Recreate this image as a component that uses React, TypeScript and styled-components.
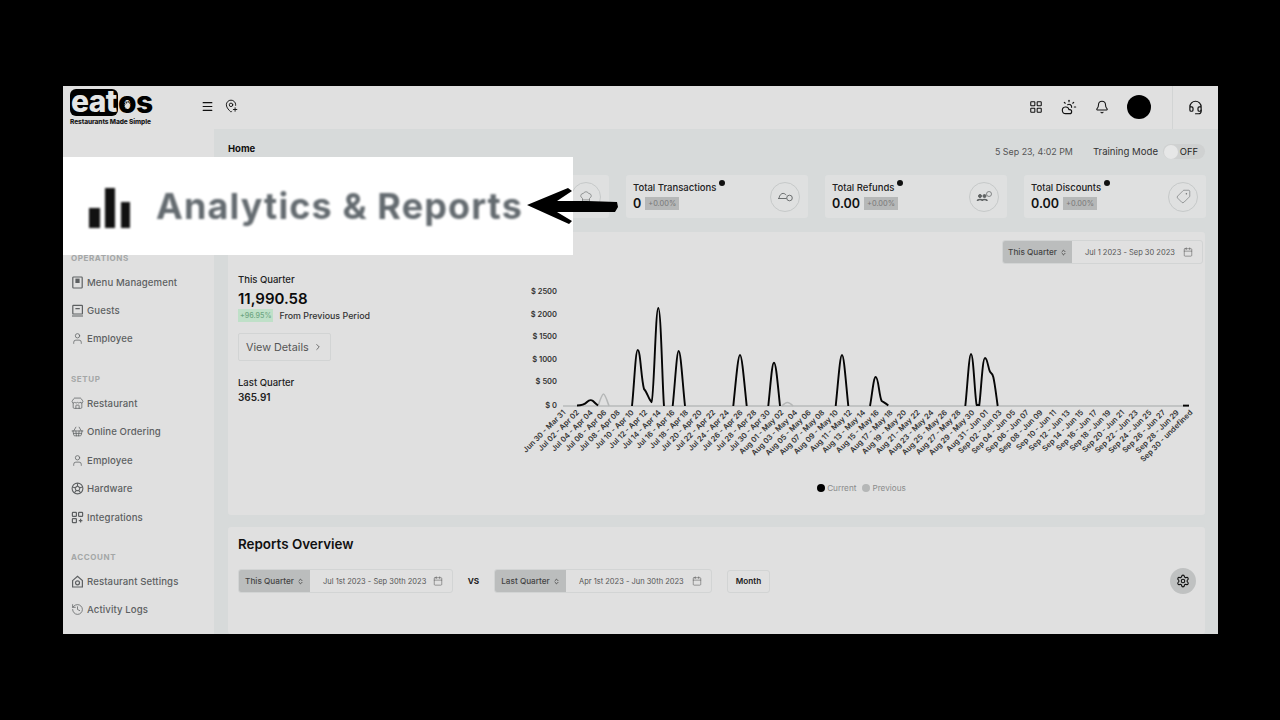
import React from "react";
import styled, { createGlobalStyle } from "styled-components";
import {
  Bell,
  Calendar,
  ChefHat,
  ChevronRight,
  ChevronsUpDown,
  CloudSun,
  Headset,
  History,
  LayoutGrid,
  MapPinPlus,
  Menu,
  Settings,
  ShoppingBasket,
  Store,
  Tag,
  User,
} from "lucide-react";

const FONT = `Inter, "Open Sans", "Liberation Sans", sans-serif`;

const GlobalStyle = createGlobalStyle`
  html, body {
    margin: 0;
    height: 100%;
    background: #000;
    font-family: ${FONT};
    overflow: hidden;
  }
`;

const Page = styled.div`
  width: 1280px;
  height: 720px;
  padding: 86px 62px 86px 63px;
  box-sizing: border-box;
  background: #000;
`;

const Frame = styled.div`
  position: relative;
  width: 1155px;
  height: 548px;
  display: flex;
  flex-direction: column;
  background: #e0e0e0;
`;

const TopBar = styled.header`
  height: 43px;
  flex: none;
  display: flex;
  align-items: center;
  background: #e0e0e0;
`;

const Logo = styled.div`
  width: 131px;
  padding-left: 7px;
  flex: none;
  color: #000;
`;

const LogoMark = styled.div`
  position: relative;
  display: flex;
  align-items: center;
  height: 27px;
  font-size: 30px;
  font-weight: 800;
  letter-spacing: -0.6px;
  line-height: 27px;
`;

const LogoBox = styled.span`
  width: 48px;
  height: 27px;
  border-radius: 6px;
  background: #000;
  color: #e4e5e5;
  display: block;
  line-height: 24px;
  padding-left: 1px;
  box-sizing: border-box;
`;

const LogoTail = styled.span`
  line-height: 27px;
`;

const LogoBurst = styled.svg`
  position: absolute;
  left: 52px;
  top: 11px;
`;

const LogoTag = styled.div`
  margin-top: 3px;
  font-size: 6.6px;
  line-height: 7px;
  font-weight: 800;
  letter-spacing: -0.1px;
  color: #1a1a1a;
  white-space: nowrap;
`;

const BarTools = styled.div`
  margin-top: -3px;
  display: flex;
  align-items: center;
  gap: 10px;
  color: #111;
`;

const BarRight = styled.div`
  margin-left: auto;
  margin-top: -1px;
  display: flex;
  align-items: center;
  gap: 18px;
  color: #111;
`;

const Avatar = styled.div`
  width: 24px;
  height: 24px;
  border-radius: 50%;
  background: #000;
`;

const Support = styled.div`
  width: 46px;
  height: 43px;
  margin-left: 3px;
  display: flex;
  align-items: center;
  justify-content: center;
  border-left: 1px solid #d2d4d4;
  box-sizing: border-box;
`;

const Body = styled.div`
  flex: 1;
  min-height: 0;
  display: flex;
`;

const Sidebar = styled.nav`
  width: 151px;
  flex: none;
  padding: 122.7px 0 0 8px;
  box-sizing: border-box;
  background: #e0e0e0;
`;

const NavTitle = styled.div<{ $first?: boolean }>`
  height: 12px;
  line-height: 12px;
  font-size: 8px;
  font-weight: 700;
  letter-spacing: 0.6px;
  color: #a4a7a7;
  margin-top: ${(p) => (p.$first ? "0" : "19.8px")};
  margin-bottom: 4.3px;
`;

const NavItem = styled.div`
  height: 28.4px;
  display: flex;
  align-items: center;
  gap: 3px;
  font-size: 9.6px;
  font-weight: 500;
  letter-spacing: 0.1px;
  color: #5d6062;
  white-space: nowrap;
`;

const Main = styled.main`
  flex: 1;
  min-width: 0;
  padding: 0 13px 0 14px;
  background: #d7dada;
  overflow: hidden;
`;

const MainHead = styled.div`
  height: 46px;
  display: flex;
  align-items: flex-start;
  justify-content: space-between;
`;

const Crumb = styled.div`
  margin-top: 14px;
  font-size: 9.5px;
  font-weight: 700;
  color: #111;
`;

const HeadRight = styled.div`
  margin-top: 15px;
  display: flex;
  align-items: center;
  font-size: 8.9px;
  color: #555;
`;

const Training = styled.span`
  margin-left: 20px;
  color: #333;
  font-size: 9.6px;
`;

const Toggle = styled.div`
  margin-left: 5px;
  width: 42px;
  height: 15px;
  border-radius: 8px;
  background: #cfd1d1;
  display: flex;
  align-items: center;
  justify-content: space-between;
  padding: 0 7px 0 1px;
  box-sizing: border-box;
  font-size: 9.4px;
  color: #222;
`;

const Knob = styled.span`
  width: 14px;
  height: 14px;
  border-radius: 50%;
  background: #e6e7e7;
`;

const Stats = styled.section`
  display: grid;
  grid-template-columns: repeat(5, 182px);
  gap: 17px;
  height: 43px;
`;

const StatCard = styled.div`
  display: flex;
  align-items: center;
  justify-content: space-between;
  padding: 0 8px 0 7px;
  border-radius: 3px;
  background: #dfe0e0;
`;

const StatLabel = styled.div`
  display: flex;
  font-size: 9.5px;
  font-weight: 500;
  color: #222;
`;

const Info = styled.span`
  width: 6px;
  height: 6px;
  margin: -2px 0 0 3px;
  border-radius: 50%;
  background: #111;
`;

const StatRow = styled.div`
  margin-top: 3px;
  display: flex;
  align-items: center;
  gap: 4px;
  font-size: 12.5px;
  font-weight: 600;
  color: #111;
`;

const Change = styled.span`
  padding: 2px 3px;
  background: #b6b8b8;
  color: #777;
  font-size: 7.4px;
  font-weight: 400;
`;

const StatIcon = styled.div`
  margin-left: auto;
  width: 30px;
  height: 30px;
  border-radius: 50%;
  border: 1px solid #c6c9c9;
  color: #5f6263;
  display: flex;
  align-items: center;
  justify-content: center;
  box-sizing: border-box;
`;

const TiltedTag = styled(Tag)`
  transform: rotate(90deg);
`;

const Panel = styled.section`
  background: #e0e0e0;
  border-radius: 3px;
`;

const ChartPanel = styled(Panel)`
  margin-top: 14px;
  height: 283px;
  padding: 8px 2px 0 10px;
  box-sizing: border-box;
`;

const PanelTop = styled.div`
  display: flex;
  justify-content: flex-end;
`;

const ChartGrid = styled.div`
  display: flex;
  height: 251px;
`;

const Summary = styled.div`
  width: 282px;
  flex: none;
  padding-top: 10px;
`;

const SummaryLabel = styled.div`
  font-size: 9.5px;
  font-weight: 500;
  color: #222;
  line-height: 12px;
`;

const BigValue = styled.div`
  margin-top: 4px;
  font-size: 15px;
  font-weight: 600;
  color: #0b0b0b;
  line-height: 18px;
`;

const SummaryRow = styled.div`
  margin-top: 1px;
  display: flex;
  align-items: center;
  gap: 6px;
  font-size: 8.9px;
  font-weight: 500;
  color: #333;
`;

const Up = styled.span`
  padding: 2px 2px;
  background: #bfe0c8;
  color: #6fa683;
  font-size: 7.1px;
`;

const DetailsButton = styled.div`
  margin-top: 11px;
  width: 93px;
  height: 28px;
  box-sizing: border-box;
  padding-left: 7px;
  display: flex;
  align-items: center;
  gap: 4px;
  border: 1px solid #d2d4d4;
  border-radius: 2px;
  font-size: 10.8px;
  color: #555;
`;

const LastLabel = styled(SummaryLabel)`
  margin-top: 16px;
`;

const LastValue = styled.div`
  margin-top: 1px;
  font-size: 10px;
  font-weight: 600;
  line-height: 14px;
  color: #222;
`;

const ChartArea = styled.div`
  flex: 1;
  min-width: 0;
  padding-top: 18px;
`;

const ChartSvg = styled.svg`
  display: block;
`;

const AxisText = styled.text`
  font-family: ${FONT};
  font-size: 7.5px;
  font-weight: 600;
  fill: #333;
`;

const Legend = styled.div`
  margin-top: 7px;
  display: flex;
  justify-content: center;
  gap: 6px;
  font-size: 8.2px;
  color: #8a8c8c;
`;

const LegendItem = styled.span`
  display: flex;
  align-items: center;
  gap: 2px;
`;

const Dot = styled.i<{ $color: string }>`
  width: 8px;
  height: 8px;
  border-radius: 50%;
  background: ${(p) => p.$color};
`;

const ReportsPanel = styled(Panel)`
  margin-top: 12px;
  height: 107px;
  padding: 8px 9px 0 10px;
  box-sizing: border-box;
`;

const ReportsTitle = styled.h2`
  margin: 0;
  font-size: 13.4px;
  font-weight: 600;
  color: #111;
  line-height: 18px;
`;

const Filters = styled.div`
  margin-top: 15px;
  display: flex;
  align-items: center;
`;

const RangePicker = styled.div<{ $width: number; $seg: number }>`
  width: ${(p) => p.$width}px;
  height: 24px;
  display: grid;
  grid-template-columns: ${(p) => p.$seg}px 1fr;
  flex: none;
  border: 1px solid #d2d4d4;
  border-radius: 3px;
  overflow: hidden;
  box-sizing: border-box;
  font-size: 8.2px;
`;

const RangeSeg = styled.div`
  background: #bbbdbd;
  color: #444;
  display: flex;
  align-items: center;
  justify-content: center;
  gap: 3px;
  font-weight: 500;
`;

const RangeDates = styled.div`
  display: flex;
  align-items: center;
  justify-content: space-between;
  padding: 0 9px 0 13px;
  font-size: 7.5px;
  color: #555;
  white-space: nowrap;
`;

const Versus = styled.span`
  width: 41px;
  text-align: center;
  font-size: 8.2px;
  font-weight: 700;
  color: #222;
`;

const MonthButton = styled.div`
  margin-left: 15px;
  width: 43px;
  height: 23px;
  display: flex;
  align-items: center;
  justify-content: center;
  border: 1px solid #d2d4d4;
  border-radius: 3px;
  box-sizing: border-box;
  font-size: 8.2px;
  font-weight: 600;
  color: #222;
`;

const GearButton = styled.div`
  margin-left: auto;
  width: 26px;
  height: 26px;
  border-radius: 50%;
  background: #bfc1c1;
  display: flex;
  align-items: center;
  justify-content: center;
  color: #111;
`;

const Callout = styled.div`
  position: absolute;
  left: 0;
  top: 71px;
  width: 510px;
  height: 98px;
  background: #fff;
  display: flex;
  align-items: center;
  padding-left: 25px;
  box-sizing: border-box;
`;

const CalloutText = styled.span`
  margin-left: 24px;
  font-size: 36px;
  font-weight: 700;
  letter-spacing: 1.1px;
  color: #646b70;
  white-space: nowrap;
  filter: blur(1.1px);
`;

const CalloutBars = styled.svg`
  margin-top: 4px;
  filter: blur(0.8px);
`;

const Arrow = styled.svg`
  position: absolute;
  left: 464px;
  top: 101px;
`;

const Glyph = styled.svg`
  flex: none;
  fill: none;
  stroke: currentColor;
`;

const MenuBookIcon = () => (
  <Glyph width="13" height="13" viewBox="0 0 13 13" strokeWidth="1.2">
    <rect x="1.8" y="1" width="9.4" height="11" rx="0.8" />
    <rect x="4.4" y="2.6" width="4.2" height="4.4" fill="currentColor" stroke="none" />
  </Glyph>
);

const GuestsIcon = () => (
  <Glyph width="13" height="13" viewBox="0 0 13 13" strokeWidth="1.2">
    <rect x="1.8" y="1.4" width="9.6" height="8.6" rx="0.6" />
    <path d="M4.4 4.6H8.8M1 12H12" />
  </Glyph>
);

const HardwareIcon = () => (
  <Glyph width="13" height="13" viewBox="0 0 13 13" strokeWidth="1.1">
    <circle cx="6.5" cy="6.5" r="5.4" />
    <path d="M6.5 4L8.9 5.8L8 8.6H5L4.1 5.8ZM6.5 4V1.2M8.9 5.8L11.6 5M8 8.6L9.7 11M5 8.6L3.3 11M4.1 5.8L1.4 5" />
  </Glyph>
);

const IntegrationsIcon = () => (
  <Glyph width="13" height="13" viewBox="0 0 13 13" strokeWidth="1.2">
    <rect x="1.4" y="1.4" width="4" height="4" rx="0.6" />
    <rect x="7.6" y="1.4" width="4" height="4" rx="0.6" />
    <rect x="1.4" y="7.6" width="4" height="4" rx="0.6" />
    <path d="M9.6 7.8V11.4M7.8 9.6H11.4" />
  </Glyph>
);

const SettingsHouseIcon = () => (
  <Glyph width="13" height="13" viewBox="0 0 13 13" strokeWidth="1.2">
    <path d="M1.6 5.6L6.5 1.4L11.4 5.6V12H1.6Z" />
    <circle cx="6.5" cy="7.8" r="2" />
  </Glyph>
);

const DishIcon = () => (
  <Glyph width="17" height="13" viewBox="0 0 17 13" strokeWidth="0.9">
    <path d="M1 8.5H9.5M2 8C2.5 5 4.5 3.4 6 3.4C7.2 3.4 8.4 4 9.2 5.2" />
    <circle cx="12.5" cy="8" r="2.8" />
  </Glyph>
);

const RefundIcon = () => (
  <Glyph width="17" height="13" viewBox="0 0 17 13" strokeWidth="1">
    <circle cx="4" cy="6" r="1.5" fill="currentColor" />
    <circle cx="8.5" cy="6" r="1.5" fill="currentColor" />
    <path d="M1.5 11C1.5 9 6.5 9 6.5 11M6 11C6 9 11 9 11 11" strokeWidth="1.6" />
    <circle cx="13" cy="4" r="2.5" strokeWidth="0.7" />
  </Glyph>
);

const stats = [
  { id: "a" },
  { id: "b", icon: <ChefHat size={14} strokeWidth={1} /> },
  { id: "c", label: "Total Transactions", value: "0", icon: <DishIcon /> },
  { id: "d", label: "Total Refunds", value: "0.00", icon: <RefundIcon /> },
  { id: "e", label: "Total Discounts", value: "0.00", icon: <TiltedTag size={15} strokeWidth={0.9} /> },
];

const navIcon = { size: 13, strokeWidth: 1.4 };

const nav = [
  {
    title: "OPERATIONS",
    items: [
      { label: "Menu Management", icon: <MenuBookIcon /> },
      { label: "Guests", icon: <GuestsIcon /> },
      { label: "Employee", icon: <User {...navIcon} /> },
    ],
  },
  {
    title: "SETUP",
    items: [
      { label: "Restaurant", icon: <Store {...navIcon} /> },
      { label: "Online Ordering", icon: <ShoppingBasket {...navIcon} /> },
      { label: "Employee", icon: <User {...navIcon} /> },
      { label: "Hardware", icon: <HardwareIcon /> },
      { label: "Integrations", icon: <IntegrationsIcon /> },
    ],
  },
  {
    title: "ACCOUNT",
    items: [
      { label: "Restaurant Settings", icon: <SettingsHouseIcon /> },
      { label: "Activity Logs", icon: <History {...navIcon} /> },
    ],
  },
];

const pad = (n: number) => String(n).padStart(2, "0");

const buildLabels = () => {
  const out = ["Jun 30 - Mar 31"];
  for (let d = 2; d <= 30; d += 2) out.push(`Jul ${pad(d)} - Apr ${pad(d)}`);
  for (let d = 1; d <= 29; d += 2) out.push(`Aug ${pad(d)} - May ${pad(d + 1)}`);
  out.push("Aug 31 - Jun 01");
  for (let d = 2; d <= 28; d += 2) out.push(`Sep ${pad(d)} - Jun ${pad(d + 1)}`);
  out.push("Sep 30 - undefined");
  return out;
};

const ticks = [
  { label: "$ 2500", y: 291 },
  { label: "$ 2000", y: 314 },
  { label: "$ 1500", y: 336 },
  { label: "$ 1000", y: 359 },
  { label: "$ 500", y: 381 },
  { label: "$ 0", y: 405 },
];

// chart coordinates are page pixels, shifted by the origin of the svg
const CHART_X = 520;
const CHART_Y = 282;
const BASE = 406;

const bell = (x0: number, xp: number, x1: number, yp: number) =>
  `M${x0} ${BASE} C${x0 + 2.5} 382 ${xp - 2} ${yp} ${xp} ${yp} C${xp + 2} ${yp} ${x1 - 2.5} 382 ${x1} ${BASE}`;

const currentLines = [
  "M577 405.5 C583 405.5 585 404 587 402 C589 400 591 399.5 593 401 C595 403 596 404 598 405.5",
  "M632 406 C634 388 635.5 350 637.7 350 C640.5 350 641 378 644 389 C647 392 649 400 651.5 402 C654 400 655.5 308 658.3 308 C661 308 662.5 390 664 406",
  bell(672.7, 678.7, 685, 351),
  bell(733.3, 740, 746.7, 355),
  bell(768.3, 774, 780, 362.7),
  bell(835.7, 842, 848.3, 355),
  "M870 406 C872 396 873.5 377 875.7 377 C878.5 377 879 396 881.7 401 C884 402.5 886 403.5 888.3 405.5",
  "M965.3 406 C967 392 969 354 971 354 C973.5 354 975 400 976.7 405 L979.3 405 C981 392 982.5 358 985 358 C987.5 358 988 368 990 371.7 C991.5 373 992.5 374 993.3 377 C995 384 996.5 398 997.7 406",
  "M1183 405.6 L1189 405.6",
];

const previousLines = [
  "M598 406 C600 400 602 394 603.5 394 C605 394 607 400 609 406",
  "M782 406 C784 404 786 402.5 787.3 402.5 C789 402.5 791 404 793 406",
];

const PriceChart = () => {
  const labels = buildLabels();
  return (
    <ChartSvg width={690} height={194} viewBox={`${CHART_X} ${CHART_Y} 690 194`}>
      {ticks.map((t) => (
        <AxisText key={t.label} x={557} y={t.y + 2.5} textAnchor="end">
          {t.label}
        </AxisText>
      ))}
      <path d={`M563 ${BASE} H1189`} stroke="#b9bbbb" strokeWidth={1.4} />
      {previousLines.map((d) => (
        <path key={d} d={d} fill="none" stroke="#b5b7b7" strokeWidth={1.7} />
      ))}
      {currentLines.map((d) => (
        <path key={d} d={d} fill="none" stroke="#050505" strokeWidth={1.9} />
      ))}
      {labels.map((l, i) => {
        const x = 566 + i * 13.63;
        return (
          <AxisText
            key={`${l}-${i}`}
            x={x}
            y={413}
            textAnchor="end"
            transform={`rotate(-45 ${x} 413)`}
          >
            {l}
          </AxisText>
        );
      })}
    </ChartSvg>
  );
};

const App = () => (
  <Page>
    <GlobalStyle />
    <Frame>
      <TopBar>
        <Logo>
          <LogoMark>
            <LogoBox>eat</LogoBox>
            <LogoTail>os</LogoTail>
            <LogoBurst width="12" height="12" viewBox="0 0 12 12">
              <circle cx="6" cy="6" r="4" fill="none" stroke="#000" strokeWidth="2" strokeDasharray="1 1" />
            </LogoBurst>
          </LogoMark>
          <LogoTag>Restaurants Made Simple</LogoTag>
        </Logo>
        <BarTools>
          <Menu size={13} strokeWidth={2.2} />
          <MapPinPlus size={14} strokeWidth={1.6} />
        </BarTools>
        <BarRight>
          <LayoutGrid size={14} strokeWidth={1.8} />
          <CloudSun size={16} strokeWidth={1.7} />
          <Bell size={14} strokeWidth={1.8} />
          <Avatar />
          <Support>
            <Headset size={15} strokeWidth={1.9} />
          </Support>
        </BarRight>
      </TopBar>
      <Body>
        <Sidebar>
          {nav.map((group, gi) => (
            <div key={group.title}>
              <NavTitle $first={gi === 0}>{group.title}</NavTitle>
              {group.items.map((item) => (
                <NavItem key={item.label}>
                  {item.icon}
                  {item.label}
                </NavItem>
              ))}
            </div>
          ))}
        </Sidebar>
        <Main>
          <MainHead>
            <Crumb>Home</Crumb>
            <HeadRight>
              5 Sep 23, 4:02 PM
              <Training>Training Mode</Training>
              <Toggle>
                <Knob />
                OFF
              </Toggle>
            </HeadRight>
          </MainHead>
          <Stats>
            {stats.map((s) => (
              <StatCard key={s.id}>
                {s.label && (
                  <div>
                    <StatLabel>
                      {s.label}
                      <Info />
                    </StatLabel>
                    <StatRow>
                      {s.value}
                      <Change>+0.00%</Change>
                    </StatRow>
                  </div>
                )}
                {s.icon && <StatIcon>{s.icon}</StatIcon>}
              </StatCard>
            ))}
          </Stats>
          <ChartPanel>
            <PanelTop>
              <RangePicker $width={201} $seg={69}>
                <RangeSeg>
                  This Quarter
                  <ChevronsUpDown size={7} strokeWidth={3} />
                </RangeSeg>
                <RangeDates>
                  Jul 1 2023 - Sep 30 2023
                  <Calendar size={10} strokeWidth={1.3} />
                </RangeDates>
              </RangePicker>
            </PanelTop>
            <ChartGrid>
              <Summary>
                <SummaryLabel>This Quarter</SummaryLabel>
                <BigValue>11,990.58</BigValue>
                <SummaryRow>
                  <Up>+96.95%</Up>
                  From Previous Period
                </SummaryRow>
                <DetailsButton>
                  View Details
                  <ChevronRight size={10} strokeWidth={2} />
                </DetailsButton>
                <LastLabel>Last Quarter</LastLabel>
                <LastValue>365.91</LastValue>
              </Summary>
              <ChartArea>
                <PriceChart />
                <Legend>
                  <LegendItem>
                    <Dot $color="#000" />
                    Current
                  </LegendItem>
                  <LegendItem>
                    <Dot $color="#b5b7b7" />
                    Previous
                  </LegendItem>
                </Legend>
              </ChartArea>
            </ChartGrid>
          </ChartPanel>
          <ReportsPanel>
            <ReportsTitle>Reports Overview</ReportsTitle>
            <Filters>
              <RangePicker $width={215} $seg={71}>
                <RangeSeg>
                  This Quarter
                  <ChevronsUpDown size={7} strokeWidth={3} />
                </RangeSeg>
                <RangeDates>
                  Jul 1st 2023 - Sep 30th 2023
                  <Calendar size={10} strokeWidth={1.3} />
                </RangeDates>
              </RangePicker>
              <Versus>VS</Versus>
              <RangePicker $width={218} $seg={71}>
                <RangeSeg>
                  Last Quarter
                  <ChevronsUpDown size={7} strokeWidth={3} />
                </RangeSeg>
                <RangeDates>
                  Apr 1st 2023 - Jun 30th 2023
                  <Calendar size={10} strokeWidth={1.3} />
                </RangeDates>
              </RangePicker>
              <MonthButton>Month</MonthButton>
              <GearButton>
                <Settings size={14} strokeWidth={1.9} />
              </GearButton>
            </Filters>
          </ReportsPanel>
        </Main>
      </Body>
      <Callout>
        <CalloutBars width={44} height={42} viewBox="0 0 44 42">
          <rect x="1" y="21" width="11" height="20" fill="#111" />
          <rect x="17" y="1" width="10" height="40" fill="#111" />
          <rect x="33" y="15" width="9" height="26" fill="#111" />
        </CalloutBars>
        <CalloutText>Analytics &amp; Reports</CalloutText>
      </Callout>
      <Arrow width={92} height={38} viewBox="0 0 92 38">
        <path
          d="M0 18 L41 1 L45 4 L30 14 L60 14 L90 15 L91 20 L88 25 L60 25 L30 25 L45 34 L42 37 Z"
          fill="#000"
        />
      </Arrow>
    </Frame>
  </Page>
);

export default App;
